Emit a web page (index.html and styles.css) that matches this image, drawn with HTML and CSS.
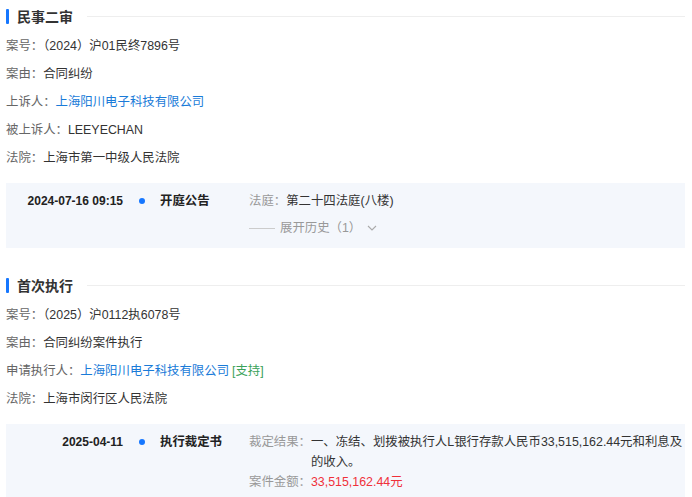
FILE: index.html
```html
<!DOCTYPE html>
<html>
<head>
  <meta charset="utf-8">
  <link rel="stylesheet" href="styles.css">
</head>
<body>
  <div class="page">
    <div class="section-title">
      <span class="bar"></span>
      <h2>民事二审</h2>
      <span class="rule"></span>
    </div>
    <div class="row"><span class="label">案号：</span><span class="val">（2024）沪01民终7896号</span></div>
    <div class="row"><span class="label">案由：</span><span class="val">合同纠纷</span></div>
    <div class="row"><span class="label">上诉人：</span><a class="link">上海阳川电子科技有限公司</a></div>
    <div class="row"><span class="label">被上诉人：</span><span class="val">LEEYECHAN</span></div>
    <div class="row"><span class="label">法院：</span><span class="val">上海市第一中级人民法院</span></div>

    <div class="timeline">
      <div class="tl-item">
        <div class="tl-date">2024-07-16 09:15</div>
        <div class="tl-dot"><span></span></div>
        <div class="tl-title">开庭公告</div>
        <div class="tl-body">
          <div><span class="muted">法庭：</span><span class="val">第二十四法庭(八楼)</span></div>
          <div class="history">
            <span class="dash"></span>
            <span>展开历史（1）</span>
            <svg width="10" height="6" viewBox="0 0 10 6"><path d="M1 1l4 4 4-4" fill="none" stroke="#aaa" stroke-width="1.1"/></svg>
          </div>
        </div>
      </div>
    </div>

    <div class="section-title second">
      <span class="bar"></span>
      <h2>首次执行</h2>
      <span class="rule"></span>
    </div>
    <div class="row"><span class="label">案号：</span><span class="val">（2025）沪0112执6078号</span></div>
    <div class="row"><span class="label">案由：</span><span class="val">合同纠纷案件执行</span></div>
    <div class="row"><span class="label">申请执行人：</span><a class="link">上海阳川电子科技有限公司</a><span class="tag">[支持]</span></div>
    <div class="row"><span class="label">法院：</span><span class="val">上海市闵行区人民法院</span></div>

    <div class="timeline">
      <div class="tl-item">
        <div class="tl-date">2025-04-11</div>
        <div class="tl-dot"><span></span></div>
        <div class="tl-title">执行裁定书</div>
        <div class="tl-body">
          <div class="kv">
            <span class="muted">裁定结果：</span>
            <span class="val"><span class="nowrap">一、冻结、划拨被执行人L银行存款人民币33,515,162.44元和利息及</span><br>的收入。</span>
          </div>
          <div class="kv"><span class="muted">案件金额：</span><span class="money">33,515,162.44元</span></div>
        </div>
      </div>
    </div>
  </div>
</body>
</html>
```
FILE: styles.css
```css
body {
  margin: 0;
  background: #fff;
  font-family: "Liberation Sans", "Noto Sans CJK SC", sans-serif;
  font-size: 12.4px;
  color: #333;
}
.page {
  width: 679px;
  padding-left: 6px;
}

.section-title {
  display: flex;
  align-items: center;
  height: 32px;
}
.section-title.second {
  margin-top: 21px;
}
.bar {
  width: 3px;
  height: 15px;
  background: #1677ff;
  border-radius: 1px;
}
.section-title h2 {
  margin: 0 0 0 8px;
  font-size: 14px;
  font-weight: bold;
  color: #333;
}
.rule {
  flex: 1;
  height: 1px;
  background: #eee;
  margin-left: 14px;
}

.row {
  height: 28px;
  line-height: 28px;
  white-space: nowrap;
}
.label {
  color: #666;
}
.val {
  color: #333;
}
.link {
  color: #1a7bd8;
}
.tag {
  color: #3aa25a;
  margin-left: 3px;
}

.timeline {
  margin-top: 11px;
  background: #f4f7fc;
}
.tl-item {
  display: flex;
  padding: 8px 0 10px;
  line-height: 20px;
}
.tl-date {
  width: 117px;
  text-align: right;
  font-size: 12px;
  font-weight: bold;
  color: #222;
  flex-shrink: 0;
}
.tl-dot {
  width: 37px;
  flex-shrink: 0;
  display: flex;
  justify-content: center;
  padding-top: 7px;
  box-sizing: border-box;
  height: 20px;
}
.tl-dot span {
  width: 6px;
  height: 6px;
  border-radius: 50%;
  background: #1677ff;
}
.tl-title {
  width: 89px;
  flex-shrink: 0;
  font-weight: bold;
  color: #222;
}
.tl-body {
  flex: 1;
  min-width: 0;
}
.muted {
  color: #999;
}
.history {
  margin-top: 7px;
  display: flex;
  align-items: center;
  color: #999;
}
.history .dash {
  width: 26px;
  height: 1px;
  background: #ccc;
  margin-right: 5px;
}
.history svg {
  margin-left: 6px;
}
.kv {
  display: flex;
}
.kv .muted {
  flex-shrink: 0;
}
.nowrap {
  white-space: nowrap;
}
.money {
  color: #f0303a;
}
```
